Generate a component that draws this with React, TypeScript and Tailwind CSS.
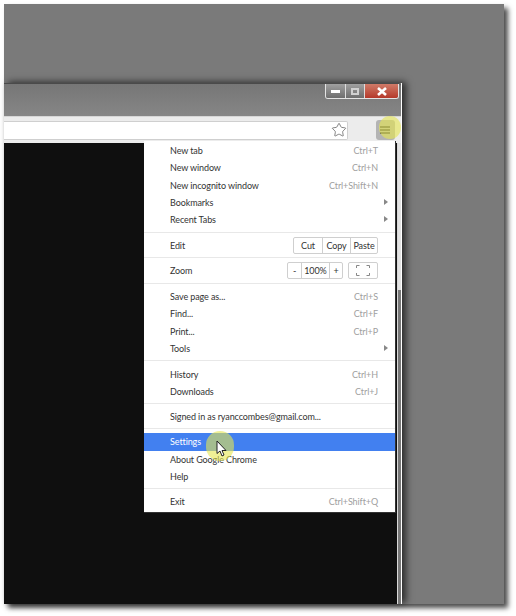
import { Star } from "lucide-react";

type Item = { label: string; shortcut?: string; arrow?: boolean; active?: boolean };

function Row({ item }: { item: Item }) {
  return (
    <div
      className={`h-[17.3px] flex items-center justify-between pl-[26px] pr-[17px] relative ${
        item.active ? "bg-[#4280f0] text-white" : "text-[#333]"
      }`}
    >
      <span>{item.label}</span>
      {item.shortcut && <span className="text-[#a0a0a0]">{item.shortcut}</span>}
      {item.arrow && (
        <span className="absolute right-[7px] top-[5px] border-y-[3.5px] border-l-[4px] border-y-transparent border-l-[#888]" />
      )}
    </div>
  );
}

function Sep() {
  return <div className="h-px bg-[#e8e8e8]" />;
}

function Cell({ children, className = "" }: { children: React.ReactNode; className?: string }) {
  return (
    <div className={`h-[15px] flex items-center justify-center border-l border-[#cfcfcf] first:border-l-0 ${className}`}>
      {children}
    </div>
  );
}

export default function App() {
  return (
    <div className="w-[516px] h-[616px] bg-white pl-[4px] pt-[4px] overflow-hidden">
      <div className="w-[500px] h-[600px] bg-[#7a7a7a] pt-[79px] shadow-[4px_4px_5px_rgba(0,0,0,0.7)]">
        <div className="w-[398px] h-[521px] flex flex-col relative border-r border-white shadow-[4px_-1px_7px_rgba(0,0,0,0.65)]">
          {/* Title bar */}
          <div className="h-[33px] bg-gradient-to-b from-[#767676] to-[#868686] border-t border-[#4a4a4a] flex justify-end pr-[2px] rounded-tr-[3px]">
            <div className="h-[15px] flex border border-t-0 border-[#e4e4e4] rounded-b-[3px] overflow-hidden">
              <div className="w-[20px] bg-gradient-to-b from-[#a0a0a0] to-[#6e6e6e] flex items-center justify-center border-r border-[#ddd]">
                <div className="w-[9px] h-[3px] bg-white" />
              </div>
              <div className="w-[19px] bg-gradient-to-b from-[#a0a0a0] to-[#6e6e6e] flex items-center justify-center border-r border-[#ddd]">
                <div className="w-[8px] h-[7px] border-2 border-[#d0d0d0]" />
              </div>
              <div className="w-[33px] bg-gradient-to-b from-[#cf7a68] to-[#b5382a] flex items-center justify-center">
                <svg width="12" height="9" viewBox="0 0 12 9">
                  <path d="M2 1 10 8M10 1 2 8" stroke="#fff" strokeWidth="2.6" />
                </svg>
              </div>
            </div>
          </div>
          {/* Toolbar */}
          <div className="h-[27px] bg-[#ececec] border-t border-[#d6d6d6] flex items-center justify-between pr-[6px]">
            <div className="w-[344px] h-[19px] bg-white border border-l-0 border-[#cfcfcf] rounded-r-[2px] flex items-center justify-end pr-[0px]">
              <Star className="w-[16px] h-[16px] text-[#666]" strokeWidth={1.2} />
            </div>
            <div className="relative w-[19px] h-[20px] bg-[#b4b4b4] rounded-[3px] flex flex-col gap-[1px] items-start justify-center pl-[4px]">
              <div className="w-[10px] h-[2px] bg-[#5c5c5c]" />
              <div className="w-[10px] h-[2px] bg-[#5c5c5c]" />
              <div className="w-[10px] h-[2px] bg-[#5c5c5c]" />
              <div className="absolute -top-[4px] left-[3px] w-[22px] h-[23px] rounded-full bg-[#e6e650]/60" />
            </div>
          </div>
          {/* Page */}
          <div className="flex-1 flex bg-[#0f0f0f]">
            <div className="flex-1" />
            <div className="w-[4px] border-l border-[#d8d8d8] flex flex-col">
              <div className="h-[147px] bg-[#e2e2e2]" />
              <div className="flex-1 bg-[#777]" />
            </div>
          </div>

          {/* Menu */}
          <div className="absolute left-[140px] top-[58px] w-[252px] h-[372px] bg-white border-r border-b border-[#333] font-['Lato',sans-serif] text-[9px] tracking-[-0.1px] leading-none text-[#333]">
            <div className="pt-[1px] pb-[4px]">
              <Row item={{ label: "New tab", shortcut: "Ctrl+T" }} />
              <Row item={{ label: "New window", shortcut: "Ctrl+N" }} />
              <Row item={{ label: "New incognito window", shortcut: "Ctrl+Shift+N" }} />
              <Row item={{ label: "Bookmarks", arrow: true }} />
              <Row item={{ label: "Recent Tabs", arrow: true }} />
            </div>
            <Sep />
            <div className="h-[24px] flex items-center justify-between pl-[26px] pr-[17px]">
              <span>Edit</span>
              <div className="flex border border-[#cfcfcf] rounded-[2px]">
                <Cell className="w-[28px]">Cut</Cell>
                <Cell className="w-[28px]">Copy</Cell>
                <Cell className="w-[27px]">Paste</Cell>
              </div>
            </div>
            <Sep />
            <div className="h-[25px] flex items-center justify-between pl-[26px] pr-[17px]">
              <span>Zoom</span>
              <div className="flex items-center gap-[5px]">
                <div className="flex border border-[#cfcfcf] rounded-[2px]">
                  <Cell className="w-[13px]">-</Cell>
                  <Cell className="w-[28px]">100%</Cell>
                  <Cell className="w-[13px]">+</Cell>
                </div>
                <div className="w-[30px] h-[17px] border border-[#cfcfcf] rounded-[2px] flex items-center justify-center">
                  <svg width="14" height="11" viewBox="0 0 14 11" fill="none" stroke="#888">
                    <path d="M.5 3V.5H3.500M10.500 .5H13.500V3M.5 8V10.500H3.500M10.500 10.500H13.500V8" />
                  </svg>
                </div>
              </div>
            </div>
            <Sep />
            <div className="py-[3.4px]">
              <Row item={{ label: "Save page as...", shortcut: "Ctrl+S" }} />
              <Row item={{ label: "Find...", shortcut: "Ctrl+F" }} />
              <Row item={{ label: "Print...", shortcut: "Ctrl+P" }} />
              <Row item={{ label: "Tools", arrow: true }} />
            </div>
            <Sep />
            <div className="pt-[4px] pb-[3px]">
              <Row item={{ label: "History", shortcut: "Ctrl+H" }} />
              <Row item={{ label: "Downloads", shortcut: "Ctrl+J" }} />
            </div>
            <Sep />
            <div className="pt-[4px] pb-[3px]">
              <Row item={{ label: "Signed in as ryanccombes@gmail.com..." }} />
            </div>
            <Sep />
            <div className="pt-[4px] pb-[3px]">
              <Row item={{ label: "Settings", active: true }} />
              <Row item={{ label: "About Google Chrome" }} />
              <Row item={{ label: "Help" }} />
            </div>
            <Sep />
            <div className="pt-[4px]">
              <Row item={{ label: "Exit", shortcut: "Ctrl+Shift+Q" }} />
            </div>
            {/* Click highlight and cursor */}
            <div className="absolute left-[62px] top-[290px] w-[28px] h-[30px] rounded-full bg-[#e6e650]/60 flex items-center justify-center">
              <svg width="11" height="17" viewBox="0 0 11 17" className="ml-[2px] mt-[4px]">
                <path d="M1 1V13.500L4 11L6 16L8 15L6 10.500H10Z" fill="#fff" stroke="#222" strokeWidth="1" />
              </svg>
            </div>
          </div>
        </div>
      </div>
    </div>
  );
}
